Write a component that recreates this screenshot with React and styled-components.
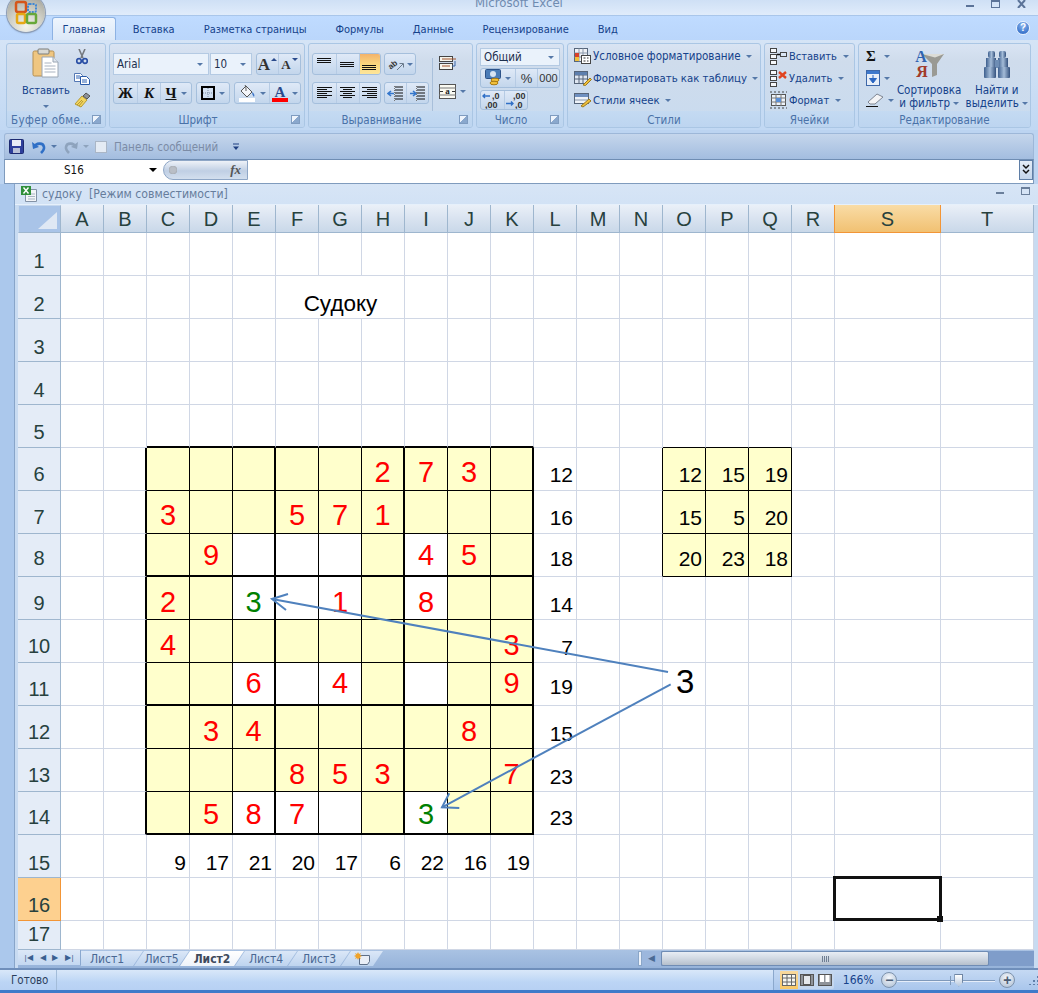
import React from 'react'
import styled, { createGlobalStyle } from 'styled-components'

const GlobalStyle = createGlobalStyle`
  html, body { margin: 0; padding: 0; background: #bcd4f1; }
  * { box-sizing: border-box; }
`

const uiFont = `"DejaVu Sans", "Noto Sans", sans-serif`
const sheetFont = `"Liberation Sans", Arial, sans-serif`

const Page = styled.div`
  position: relative;
  width: 1038px;
  height: 993px;
  overflow: hidden;
  display: flex;
  flex-direction: column;
  background: #bcd4f1;
  font-family: ${uiFont};
  font-stretch: condensed;
  font-size: 11px;
  color: #15428b;
`
const Spacer = styled.span`
  flex: none;
  width: ${p => p.$w}px;
`

/* ---------- window top ---------- */
const TitleBar = styled.div`
  position: relative;
  height: 16px;
  flex: none;
  overflow: hidden;
  background: linear-gradient(#cfe0f5, #e0ecfb);
  border-bottom: 1px solid #a9c6ea;
`
const TitleText = styled.div`
  position: absolute;
  left: 475px;
  top: -5px;
  font-size: 13px;
  line-height: 15px;
  color: #6f8bb0;
`
const WinButtons = styled.div`
  position: absolute;
  right: 12px;
  top: 0;
  display: flex;
  gap: 17px;
`
const Orb = styled.div`
  position: absolute;
  left: 7px;
  top: -6px;
  width: 38px;
  height: 38px;
  border-radius: 50%;
  display: flex;
  align-items: center;
  justify-content: center;
  background: radial-gradient(circle at 50% 85%, #f4f4ee 0%, #cfcfc6 45%, #b4b4ab 70%, #8d8d86 100%);
  box-shadow: 0 0 0 1px #8e9db4, 0 1px 2px #6c83a6;
  z-index: 5;
`
const TabStrip = styled.div`
  height: 24px;
  flex: none;
  display: flex;
  align-items: flex-end;
  padding-left: 52px;
  background: linear-gradient(#bfdbff, #bad6fb);
  position: relative;
`
const RibbonTab = styled.div`
  height: ${p => (p.$active ? 23 : 22)}px;
  padding: 0 ${p => (p.$active ? 9.5 : 14.5)}px;
  margin-left: ${p => (p.$first ? 2.5 : 0)}px;
  display: flex;
  align-items: center;
  font-size: 11px;
  color: #15428b;
  ${p => p.$active && `
    background: linear-gradient(#eef5fd, #dbe8f8);
    border: 1px solid #8db2e3;
    border-bottom: none;
    border-radius: 3px 3px 0 0;
  `}
`
const HelpDot = styled.div`
  position: absolute;
  right: 8px;
  top: 5px;
  width: 14px;
  height: 14px;
  border-radius: 50%;
  background: radial-gradient(circle at 50% 30%, #8fb8ee, #1b5cc0);
  border: 1px solid #eaf2fc;
  color: #fff;
  font: bold 10px/12px ${sheetFont};
  text-align: center;
`

/* ---------- ribbon ---------- */
const Ribbon = styled.div`
  height: 90px;
  flex: none;
  display: flex;
  gap: 3px;
  padding: 3px 0 2px 6px;
  background: linear-gradient(#d5e4f6, #c1d8f3);
`
const Group = styled.div`
  position: relative;
  width: ${p => p.$w}px;
  display: flex;
  flex-direction: column;
  border: 1px solid #aac6e4;
  border-radius: 3px;
  background: linear-gradient(#d9e4f3 0%, #cfdcec 20%, #c9dbef 100%);
  overflow: hidden;
`
const GroupBody = styled.div`
  flex: 1;
  min-height: 0;
  display: flex;
  padding: ${p => p.$pad || '0'};
`
const GroupLabel = styled.div`
  height: 16px;
  flex: none;
  display: flex;
  align-items: center;
  justify-content: ${p => (p.$left ? 'flex-start' : 'center')};
  padding-left: ${p => (p.$left ? '4px' : '0')};
  padding-right: ${p => (p.$launcher ? '18px' : '0')};
  padding-top: 1px;
  letter-spacing: ${p => (p.$left ? '0.4px' : '0')};
  font-size: 11.5px;
  line-height: 16px;
  color: #4a72a8;
  background: linear-gradient(#c4daf2, #bdd5f0);
  white-space: nowrap;
`
const Launcher = styled.div`
  position: absolute;
  right: 4px;
  bottom: 3px;
  width: 9px;
  height: 9px;
  border: 1px solid #7f9cc0;
  background: linear-gradient(135deg, #eef4fc 45%, #8aa8cd 50%);
`
const ToolColumn = styled.div`
  display: flex;
  flex-direction: column;
  gap: ${p => p.$gap || 0}px;
  width: ${p => (p.$w ? `${p.$w}px` : 'auto')};
  padding-top: ${p => p.$top || 0}px;
`
const ToolRow = styled.div`
  display: flex;
  gap: ${p => p.$gap ?? 4}px;
  height: ${p => p.$h || 22}px;
`
const Combo = styled.div`
  width: ${p => p.$w}px;
  height: 100%;
  display: flex;
  align-items: center;
  justify-content: space-between;
  padding: 0 5px 0 3px;
  background: #eaf2fb;
  border: 1px solid #b4cae3;
  color: #1d2f4d;
  font-size: 11.5px;
`
const Caret = styled.span`
  flex: none;
  display: inline-block;
  width: 0;
  height: 0;
  border-left: 3px solid transparent;
  border-right: 3px solid transparent;
  border-top: 3px solid ${p => p.$c || '#5578a8'};
`
const NameCaret = styled(Caret)`
  border-width: 4px 4px 0;
`
const GrowCaret = styled(Caret)`
  margin: 0 0 9px -3px;
  transform: ${p => (p.$up ? 'rotate(180deg)' : 'none')};
`
const BtnBox = styled.div`
  width: ${p => p.$w}px;
  height: 100%;
  margin-left: ${p => p.$ml || 0}px;
  display: flex;
  border: 1px solid #a5bfdc;
  border-radius: 3px;
  background: linear-gradient(#dfe9f7, #c3d6ec);
  overflow: hidden;
`
const Btn = styled.div`
  flex: ${p => (p.$w ? `0 0 ${p.$w}px` : '1')};
  display: flex;
  align-items: center;
  justify-content: center;
  gap: ${p => p.$gap ?? 4}px;
  ${p => p.$on && 'background: linear-gradient(#f3b36b, #fbd97f 55%, #fde59a);'}
  & + & { border-left: 1px solid #b6cbe4; }
`
const StyleGlyph = styled.span`
  font-family: "Liberation Serif", serif;
  font-weight: bold;
  font-style: ${p => (p.$italic ? 'italic' : 'normal')};
  text-decoration: ${p => (p.$under ? 'underline' : 'none')};
  font-size: ${p => p.$size || 14}px;
  color: ${p => p.$c || '#111'};
  line-height: 1;
`
const NumGlyph = styled.span`
  font-family: ${sheetFont};
  font-size: ${p => p.$size}px;
  color: #333;
`
const PasteBtn = styled.div`
  width: 52px;
  margin-left: 13px;
  display: flex;
  flex-direction: column;
  align-items: center;
  padding-top: 4px;
  font-size: 11px;
  color: #15428b;
  span.t { margin-top: 4px; line-height: 14px; }
  ${Caret} { margin-top: 7px; }
`
const ClipColumn = styled.div`
  width: 20px;
  display: flex;
  flex-direction: column;
  align-items: center;
  justify-content: space-between;
  padding: 5px 0 3px;
`
const VSep = styled.div`
  width: 1px;
  height: 55px;
  margin: 5px 6px 0 3px;
  background: #a8bfda;
`
const ListRow = styled.div`
  height: 22px;
  display: flex;
  align-items: center;
  gap: ${p => p.$gap ?? 1}px;
  white-space: nowrap;
  font-size: ${p => p.$size || 11.5}px;
  color: #15428b;
  ${Caret} { margin-left: 4px; }
`
const BigBtn = styled.div`
  width: ${p => p.$w}px;
  display: flex;
  flex-direction: column;
  align-items: center;
  padding-top: 4px;
  font-size: 11.5px;
  line-height: 13px;
  color: #15428b;
  white-space: nowrap;
  text-align: center;
  svg { margin-bottom: 5px; }
  ${Caret} { margin-left: 3px; vertical-align: 2px; }
`
const SmallDrop = styled.div`
  height: 22px;
  display: flex;
  align-items: center;
  gap: ${p => p.$gap ?? 4}px;
`

/* ---------- quick access and formula bar ---------- */
const Qat = styled.div`
  height: 26px;
  flex: none;
  margin: 3px 4px 0;
  display: flex;
  align-items: center;
  padding-left: 4px;
  border: 1px solid #9db7d8;
  border-bottom: none;
  border-radius: 3px 3px 0 0;
  background: linear-gradient(#c5d6ec, #a3bddf);
  color: #7c8ca6;
  font-size: 11.5px;
`
const QatCheck = styled.div`
  width: 12px;
  height: 12px;
  margin: 0 7px 0 0;
  background: #e4ebf4;
  border: 1px solid #aab6c6;
`
const FormulaBar = styled.div`
  height: 25px;
  flex: none;
  margin: 0 4px;
  display: flex;
  background: #fff;
  border: 1px solid #7f9bbd;
  border-top: 1px solid #6f8db3;
  padding-bottom: 3px;
`
const NameBox = styled.div`
  width: 158px;
  display: flex;
  align-items: center;
  justify-content: space-between;
  padding: 0 6px 0 59px;
  color: #111;
  font-size: 11.5px;
`
const FxPill = styled.div`
  width: 85px;
  display: flex;
  align-items: center;
  justify-content: space-between;
  padding: 0 6px 0 5px;
  background: linear-gradient(#eef2f8, #c0cfe4 55%, #d3dfee);
  border: 1px solid #8ea6c6;
  border-radius: 11px 0 0 11px;
  font: italic bold 13px "Liberation Serif", serif;
  color: #555;
`
const FxDot = styled.div`
  width: 8px;
  height: 8px;
  border-radius: 50%;
  background: #b9bec6;
  box-shadow: inset 0 0 1px #777;
`
const FormulaInput = styled.div`
  flex: 1;
`
const ExpandBtn = styled.div`
  width: 14px;
  display: flex;
  align-items: center;
  justify-content: center;
  background: linear-gradient(#e3ecf7, #c4d5ea);
  border: 1px solid #5f7ea6;
`

/* ---------- workbook window ---------- */
const WorkArea = styled.div`
  flex: 1;
  min-height: 0;
  display: flex;
`
const SideBand = styled.div`
  width: 15px;
  flex: none;
  background: #abc8ec;
  border-right: 1px solid #88a5c9;
`
const DocWindow = styled.div`
  flex: 1;
  min-width: 0;
  display: flex;
  flex-direction: column;
  background: #c8dbf1;
`
const DocTitle = styled.div`
  position: relative;
  height: 21px;
  flex: none;
  display: flex;
  align-items: center;
  gap: 5px;
  padding-left: 6px;
  background: linear-gradient(#d7e5f6, #d2e2f5);
  border-bottom: 1px solid #e6f0fb;
  color: #667d9c;
  font-size: 12.2px;
  white-space: pre;
`
const DocButtons = styled.div`
  position: absolute;
  right: 8px;
  top: 3px;
  display: flex;
  gap: 17px;
`
const SheetWrap = styled.div`
  position: relative;
  margin-left: 3px;
  width: 1016px;
  height: 745px;
  flex: none;
  background: #fff;
`
const SheetGrid = styled.div`
  display: grid;
  grid-template-columns: repeat(19, 43px) 106px 93px;
  grid-template-rows: 28px repeat(15, 43px) 43px 29px;
  width: 100%;
  height: 100%;
`
const Corner = styled.div`
  position: relative;
  background: #a9c4e8;
  border: 1px solid #c6d8ee;
  border-right-color: #9eb6ce;
  border-bottom-color: #9eb6ce;
  &::after {
    content: '';
    position: absolute;
    right: 3px;
    bottom: 3px;
    width: 19px;
    height: 17px;
    background: #dfe8f4;
    clip-path: polygon(100% 0, 100% 100%, 0 100%);
  }
`
const ColHead = styled.div`
  display: flex;
  align-items: center;
  justify-content: center;
  font: 20px/1 ${sheetFont};
  color: #27413e;
  border-right: 1px solid ${p => (p.$sel ? '#f29536' : '#9eb6ce')};
  border-bottom: 1px solid ${p => (p.$sel ? '#f29536' : '#9eb6ce')};
  background: ${p => (p.$sel
    ? 'linear-gradient(#f9dca6, #f1c172)'
    : 'linear-gradient(#eaf0f8, #d9e3f0 50%, #c9d8e9)')};
  ${p => p.$sel && 'border-left: 1px solid #f29536; margin-left: -1px;'}
`
const RowHead = styled.div`
  display: flex;
  align-items: flex-end;
  justify-content: center;
  padding-bottom: ${p => 4 + (p.$lift || 0)}px;
  font: 20px/1 ${sheetFont};
  color: #27413e;
  border-right: 1px solid ${p => (p.$sel ? '#f29536' : '#9eb6ce')};
  border-bottom: 1px solid ${p => (p.$sel ? '#f29536' : '#9eb6ce')};
  background: ${p => (p.$sel ? '#fdd08f' : '#e4ecf7')};
`
const Cell = styled.div`
  position: relative;
  display: flex;
  align-items: flex-end;
  justify-content: ${p => (p.$align === 'center' ? 'center' : 'flex-end')};
  padding: ${p => (p.$align === 'center' ? `0 0 ${3 + p.$lift}px` : `0 3px ${5 + p.$lift}px 0`)};
  white-space: nowrap;
  font-family: ${sheetFont};
  font-size: ${p => p.$size}px;
  line-height: 1;
  color: ${p => p.$c || '#000'};
  background: ${p => p.$fill || 'transparent'};
  border-right: ${p => p.$right};
  border-bottom: ${p => p.$bottom};
`
const CellSelection = styled.div`
  position: absolute;
  left: -2px;
  top: -2px;
  right: -2px;
  bottom: -1px;
  border: 3px solid #111;
  z-index: 2;
  &::after {
    content: '';
    position: absolute;
    right: -4px;
    bottom: -4px;
    width: 6px;
    height: 6px;
    background: #111;
  }
`
const ArrowLayer = styled.svg`
  position: absolute;
  left: 0;
  top: 0;
  width: 1016px;
  height: 745px;
  pointer-events: none;
  z-index: 3;
`
const FloatDigit = styled.div`
  position: absolute;
  left: 658px;
  top: 460px;
  font: 33px/1 ${sheetFont};
  color: #000;
  z-index: 3;
`

/* ---------- sheet tabs and status ---------- */
const SheetBar = styled.div`
  margin-left: 3px;
  width: 1016px;
  height: 18px;
  flex: none;
  display: flex;
  background: linear-gradient(#a9c2e3, #96b3da);
`
const SheetNav = styled.div`
  width: 63px;
  flex: none;
  display: flex;
  align-items: center;
  justify-content: space-around;
  padding: 0 3px;
  margin-bottom: 3px;
  background: linear-gradient(#dce8f7, #c4d8f1);
  border-right: 1px solid #8aa8cf;
  color: #3a5f90;
  font: 8px/1 ${sheetFont};
`
const TabsRow = styled.div`
  display: flex;
  height: 15px;
  margin-top: 1px;
`
const SheetTab = styled.div`
  width: ${p => p.$w}px;
  margin-left: ${p => (p.$first ? 0 : -9)}px;
  display: flex;
  align-items: center;
  justify-content: center;
  padding-right: ${p => (p.$first ? 10 : 0)}px;
  font-size: 12px;
  font-weight: ${p => (p.$active ? 'bold' : 'normal')};
  color: ${p => (p.$active ? '#3f4a5c' : '#4a6893')};
  background: ${p => (p.$active ? 'linear-gradient(#fff, #eef3fa)' : 'linear-gradient(#dbe7f7, #bed4ef)')};
  clip-path: ${p => (p.$first
    ? 'polygon(0 0, 100% 0, calc(100% - 10px) 100%, 0 100%)'
    : 'polygon(10px 0, 100% 0, calc(100% - 10px) 100%, 0 100%)')};
  z-index: ${p => (p.$active ? 2 : 1)};
`
const HScroll = styled.div`
  margin-left: auto;
  width: 396px;
  display: flex;
  align-items: center;
  height: 15px;
  margin-top: 1px;
  background: #7f9dca;
`
const ScrollGrip = styled.div`
  width: 4px;
  height: 100%;
  background: #eef3fa;
  border: 1px solid #8aa6c8;
`
const ScrollLeft = styled.div`
  width: 19px;
  display: flex;
  justify-content: center;
  color: #4a6a94;
  font: 9px/1 ${sheetFont};
  background: #9cb7dd;
  height: 100%;
  align-items: center;
`
const ScrollThumb = styled.div`
  width: 328px;
  height: 100%;
  display: flex;
  align-items: center;
  justify-content: center;
  background: linear-gradient(#e8edf4, #d0d8e2 50%, #b5bfcc);
  border: 1px solid #6f8cb4;
  border-radius: 2px;
`
const ThumbLines = styled.div`
  width: 7px;
  height: 6px;
  background: repeating-linear-gradient(90deg, #6f7e92 0 1px, transparent 1px 2px);
`
const StatusBar = styled.div`
  height: 23px;
  flex: none;
  margin-top: 2px;
  display: flex;
  align-items: stretch;
  background: linear-gradient(#d9e7f9, #bcd5f5 60%, #b7d1f3);
  border-bottom: 3px solid #3f7ac9;
  box-shadow: 0 -2px 0 #6f8fbb;
  color: #2c3f5c;
  font-size: 11.5px;
`
const StatusText = styled.div`
  width: 57px;
  flex: none;
  padding-left: 11px;
  display: flex;
  align-items: center;
  border-right: 1px solid #a3bcd9;
`
const StatusRight = styled.div`
  margin-left: auto;
  width: 265px;
  display: flex;
  align-items: center;
  border-left: 1px solid #8ba8cc;
  background: linear-gradient(#c5d9f3, #a9c6ec);
  padding-left: 6px;
`
const ViewBtns = styled.div`
  display: flex;
  width: 56px;
  height: 18px;
  border-radius: 2px;
  background: #c4d7ef;
`
const ViewBtn = styled.div`
  flex: 1;
  display: flex;
  align-items: center;
  justify-content: center;
  ${p => p.$on && 'background: linear-gradient(#f8d9a0, #f9c866);'}
`
const ZoomText = styled.div`
  width: 40px;
  margin-left: 9px;
  color: #15428b;
  font-size: 12px;
`
const ZoomRound = styled.div`
  width: 16px;
  height: 16px;
  flex: none;
  border-radius: 50%;
  border: 1px solid #7d93ad;
  background: radial-gradient(circle at 50% 35%, #f5f8fc, #aabcd2);
  display: flex;
  align-items: center;
  justify-content: center;
  font: bold 14px/1 ${sheetFont};
  color: #4b5d75;
`
const ZoomTrack = styled.div`
  position: relative;
  width: 102px;
  height: 1px;
  margin-right: 4px;
  background: #7f99ba;
  box-shadow: 0 1px 0 #e6eefa;
`
const ZoomMark = styled.div`
  position: absolute;
  left: 53px;
  top: -4px;
  width: 1px;
  height: 9px;
  background: #7f99ba;
`
const ZoomThumb = styled.div`
  position: absolute;
  left: 57px;
  top: -6px;
  width: 9px;
  height: 13px;
  background: linear-gradient(#fff, #b8c9de);
  border: 1px solid #6f86a4;
  clip-path: polygon(0 0, 100% 0, 100% 65%, 50% 100%, 0 65%);
`
const Grip = styled.div`
  width: 10px;
  height: 10px;
  margin-left: 13px;
  background: radial-gradient(circle, #5f7ea8 1px, transparent 1.5px) 0 0 / 4px 4px;
  clip-path: polygon(100% 0, 100% 100%, 0 100%);
`

/* ---------- icons ---------- */
const OrbLogo = () => (
  <svg width="26" height="26" viewBox="0 0 26 26">
    <rect x="3" y="2" width="10" height="10" rx="2" fill="none" stroke="#d5561a" strokeWidth="2.5" />
    <rect x="15" y="4" width="8" height="8" rx="1.5" fill="none" stroke="#3f87d4" strokeWidth="2" strokeDasharray="2 1" />
    <rect x="4" y="14" width="8" height="9" rx="1.5" fill="none" stroke="#e6a817" strokeWidth="2.5" />
    <rect x="14" y="14" width="9" height="9" rx="1.5" fill="none" stroke="#67a83a" strokeWidth="2.5" />
  </svg>
)
const ClipboardIcon = () => (
  <svg width="28" height="32" viewBox="0 0 28 32">
    <rect x="1" y="3" width="21" height="25" rx="1.5" fill="#efc681" stroke="#b58f52" />
    <rect x="6" y="1" width="11" height="5" rx="1" fill="#d9d9d4" stroke="#7d7d78" />
    <path d="M10 9h11l5 5v15H10z" fill="#fff" stroke="#9aa6b4" />
    <path d="M21 9v5h5" fill="#dfe6ee" stroke="#9aa6b4" />
    <path d="M12.500 15h7M12.500 18h11M12.500 21h11M12.500 24h11" stroke="#a9b3c0" />
  </svg>
)
const ScissorsIcon = () => (
  <svg width="12" height="16" viewBox="0 0 12 16">
    <path d="M3 0l4 9M9 0L5 9" stroke="#75797f" strokeWidth="1.6" />
    <circle cx="3" cy="12" r="2.3" fill="none" stroke="#2a4fa5" strokeWidth="1.7" />
    <circle cx="9" cy="12" r="2.3" fill="none" stroke="#2a4fa5" strokeWidth="1.7" />
  </svg>
)
const CopyIcon = () => (
  <svg width="16" height="12" viewBox="0 0 16 12">
    <path d="M.5.5h6l2 2v6h-8z" fill="#fff" stroke="#5478b4" />
    <path d="M6.500 3.500h6l3 3v5h-9z" fill="#fff" stroke="#2a5aa8" />
    <path d="M2 3h4M2 5h4M8 7h5M8 9h5" stroke="#2f63b4" />
  </svg>
)
const BrushIcon = () => (
  <svg width="17" height="16" viewBox="0 0 17 16">
    <path d="M1 12L8 4l5 4-6 7z" fill="#f3d45f" stroke="#b59a32" />
    <path d="M3 13l5-5M5 14l4-5" stroke="#b59a32" />
    <path d="M9 4l3-3 4 3-3 3z" fill="#8d9199" stroke="#555" />
  </svg>
)
const Lines = ({ w = 16, h = 14, rows, c = '#111' }) => (
  <svg width={w} height={h} viewBox={`0 0 ${w} ${h}`}>
    {rows.map(([x1, x2, y], i) => (
      <rect key={i} x={x1} y={y} width={x2 - x1} height="1" fill={c} />
    ))}
  </svg>
)
const BorderIcon = () => (
  <svg width="14" height="14" viewBox="0 0 14 14">
    <rect x="1" y="1" width="12" height="12" fill="none" stroke="#000" strokeWidth="2" />
    <path d="M7 2v10M2 7h10" stroke="#7a8aa0" strokeDasharray="1 1" />
  </svg>
)
const FillIcon = () => (
  <svg width="17" height="18" viewBox="0 0 17 18">
    <path d="M2 7l5-5 6 6-5 5z" fill="#f4f6fa" stroke="#555" />
    <path d="M6 1c1 1 1 4 1 6" fill="none" stroke="#555" />
    <path d="M13 8c2 1 3 3 2 5-1-1-2-3-2-5z" fill="#3f77c8" />
    <rect x="0" y="14" width="16" height="4" fill="#fff" />
  </svg>
)
const ColorAIcon = () => (
  <svg width="16" height="18" viewBox="0 0 16 18">
    <text x="8" y="12.500" textAnchor="middle" fontFamily="Liberation Serif, serif" fontWeight="bold" fontSize="15" fill="#2a4a8c">A</text>
    <rect x="0" y="14" width="16" height="4" fill="#f00" />
  </svg>
)
const OrientIcon = () => (
  <svg width="18" height="15" viewBox="0 0 18 15">
    <text x="1" y="11" transform="rotate(-40 5 8)" fontFamily="Liberation Sans, sans-serif" fontWeight="bold" fontSize="8" fill="#333">ab</text>
    <path d="M10 13l6-6M12.500 6.500H16.500V10.500" fill="none" stroke="#6a7a8c" />
  </svg>
)
const IndentIcon = ({ flip }) => (
  <svg width="17" height="15" viewBox="0 0 17 15">
    <path d={flip ? 'M1 7.500h5M4 5l3 2.500L4 10' : 'M7 7.500H2M4 5L1 7.500 4 10'} fill="none" stroke="#3577cc" strokeWidth="1.6" />
    <path d="M8 1h8M8 4h8M8 7h8M8 10h8M8 13h8" stroke="#111" />
    <path d="M7.500 0v15" stroke="#777" strokeDasharray="1 1" />
  </svg>
)
const WrapIcon = () => (
  <svg width="18" height="16" viewBox="0 0 18 16">
    <rect x=".5" y="1.500" width="13" height="5" fill="#f6f6ee" stroke="#444" />
    <rect x=".5" y="8.500" width="13" height="6" fill="#f6f6ee" stroke="#444" />
    <path d="M3 4h14M3 11h8" stroke="#a0522d" />
    <path d="M16 6v5h-3" fill="none" stroke="#3a66a8" />
  </svg>
)
const MergeIcon = () => (
  <svg width="17" height="15" viewBox="0 0 17 15">
    <rect x=".5" y=".5" width="16" height="14" fill="#fafaf2" stroke="#555" />
    <path d="M0 4h17M0 11h17" stroke="#777" />
    <text x="8.500" y="10" textAnchor="middle" fontFamily="Liberation Serif, serif" fontWeight="bold" fontSize="9" fill="#222">a</text>
    <path d="M1 7.500h3M16 7.500h-3" stroke="#333" />
  </svg>
)
const MoneyIcon = () => (
  <svg width="16" height="18" viewBox="0 0 16 18">
    <rect x=".5" y=".5" width="15" height="9" rx="1" fill="#4a7cb8" stroke="#2c5288" />
    <ellipse cx="8" cy="5" rx="3" ry="3" fill="#d6e3f3" />
    <ellipse cx="10" cy="11" rx="4" ry="1.800" fill="#f0bf3b" stroke="#a87a12" />
    <ellipse cx="9" cy="14" rx="4" ry="1.800" fill="#f0bf3b" stroke="#a87a12" />
  </svg>
)
const DecimalIcon = ({ more }) => (
  <svg width="21" height="18" viewBox="0 0 21 18">
    <text x={more ? 8 : 10} y="8" fontFamily="Liberation Sans, sans-serif" fontWeight="bold" fontSize="9" fill="#333">{more ? ',00' : ',0'}</text>
    <text x={more ? 10 : 3} y="17" fontFamily="Liberation Sans, sans-serif" fontWeight="bold" fontSize="9" fill="#333">{more ? ',0' : ',00'}</text>
    <path d={more ? 'M1 12.500h7M6 10.500l2 2-2 2' : 'M1 5h7M3 3L1 5l2 2'} fill="none" stroke="#2f6fc6" strokeWidth="1.4" />
  </svg>
)
const TableIcon = () => (
  <svg width="18" height="16" viewBox="0 0 18 16">
    <rect x=".5" y="1.500" width="13" height="12" fill="#dfe7f2" stroke="#56657a" />
    <path d="M.5 5h13M.5 9h13M5 1.500v12M9 1.500v12" stroke="#56657a" />
    <rect x="1" y="2" width="12" height="3" fill="#5d7fae" />
    <path d="M9 15l7-7 1.500 1.500-6 6z" fill="#f0bf3b" stroke="#9a7a20" />
  </svg>
)
const CondIcon = () => (
  <svg width="18" height="16" viewBox="0 0 18 16">
    <rect x=".5" y=".5" width="13" height="13" fill="#f0f2f6" stroke="#56657a" />
    <path d="M5 .5v13M9 .5v13M.5 5h13M.5 9h13" stroke="#8a98ab" />
    <rect x="1" y="5" width="4" height="4" fill="#d9402a" />
    <rect x="1" y="9" width="4" height="4" fill="#f0bf3b" />
    <rect x="7.500" y="7.500" width="9" height="8" fill="#fff" stroke="#444" />
    <path d="M9.500 10h2M13 10h1.500M9.500 13h2M13 13h1.500" stroke="#333" />
  </svg>
)
const PencilTable = () => (
  <svg width="18" height="16" viewBox="0 0 18 16">
    <rect x=".5" y="1.500" width="14" height="10" fill="#eef2f8" stroke="#56657a" />
    <rect x="1" y="2" width="13" height="3" fill="#6f90c0" />
    <path d="M1 8h13" stroke="#8a98ab" />
    <path d="M7 14l8-7 2 2-8 6z" fill="#f0bf3b" stroke="#9a7a20" />
  </svg>
)
const CellsIcon = ({ kind }) => (
  <svg width="17" height="18" viewBox="0 0 17 18">
    <rect x=".5" y="1.500" width="6" height="4" fill="#f6f8fb" stroke="#444" />
    <rect x=".5" y="7.500" width="6" height="4" fill="#f6f8fb" stroke="#444" />
    <rect x=".5" y="13.500" width="6" height="4" fill="#f6f8fb" stroke="#444" />
    {kind === 'ins' && <><rect x="10.500" y="5.500" width="6" height="4" fill="#dbe6f4" stroke="#444" /><path d="M7 7.500h3" stroke="#111" strokeWidth="1.5" /></>}
    {kind === 'del' && <path d="M9 3l7 6M16 3l-7 6" stroke="#e0431f" strokeWidth="2.4" />}
  </svg>
)
const FormatCellsIcon = () => (
  <svg width="17" height="18" viewBox="0 0 17 18">
    <rect x="1.500" y="3.500" width="14" height="11" fill="#eef3f9" stroke="#555" />
    <path d="M1 7h15M1 11h15M6 3v12M11 3v12" stroke="#777" />
    <rect x="6" y="7" width="5" height="4" fill="#5b8fd6" />
    <path d="M0 1h17M0 17h17" stroke="#444" strokeDasharray="2 2" />
  </svg>
)
const DownFillIcon = () => (
  <svg width="14" height="16" viewBox="0 0 14 16">
    <rect x=".5" y=".5" width="13" height="15" fill="#e7eef8" stroke="#3d67a8" />
    <rect x="1" y="1" width="12" height="3" fill="#3d78cc" />
    <path d="M7 5v4M3.500 8.500L7 13l3.500-4.500z" fill="#2a66c2" stroke="#2a66c2" />
  </svg>
)
const EraserIcon = () => (
  <svg width="18" height="14" viewBox="0 0 18 14">
    <path d="M2 9l9-8 6 3-8 7H4z" fill="#f4f4f6" stroke="#7d8592" />
    <path d="M0 13.500h12" stroke="#111" />
  </svg>
)
const SortIcon = () => (
  <svg width="30" height="30" viewBox="0 0 30 30">
    <path d="M8 5h22l-7 10v11l-5 2V15z" fill="#9a9a94" />
    <path d="M8 5h22l-9 3.500z" fill="#dcdcd6" />
    <text x="7" y="13" textAnchor="middle" fontFamily="Liberation Serif, serif" fontWeight="bold" fontSize="16" fill="#2f63b0">A</text>
    <text x="8" y="28" textAnchor="middle" fontFamily="Liberation Serif, serif" fontWeight="bold" fontSize="16" fill="#a23b2a">Я</text>
  </svg>
)
const BinocularsIcon = () => (
  <svg width="28" height="30" viewBox="0 0 28 30">
    <defs>
      <linearGradient id="bn" x1="0" x2="1"><stop offset="0" stopColor="#3d5f8e" /><stop offset=".5" stopColor="#a4bcd8" /><stop offset="1" stopColor="#34527e" /></linearGradient>
    </defs>
    <rect x="5" y="2" width="7" height="7" rx="2" fill="url(#bn)" />
    <rect x="16" y="2" width="7" height="7" rx="2" fill="url(#bn)" />
    <rect x="3" y="9" width="10" height="9" fill="url(#bn)" />
    <rect x="15" y="9" width="10" height="9" fill="url(#bn)" />
    <rect x="12" y="11" width="4" height="8" fill="#6e8db4" />
    <rect x="1" y="18" width="12" height="11" rx="1" fill="url(#bn)" />
    <rect x="15" y="18" width="12" height="11" rx="1" fill="url(#bn)" />
  </svg>
)
const SaveIcon = () => (
  <svg width="15" height="15" viewBox="0 0 15 15">
    <rect x=".5" y=".5" width="14" height="14" rx="1" fill="#2e3f9b" stroke="#1d2a70" />
    <rect x="3" y="1" width="9" height="6" fill="#e9edf6" />
    <rect x="4" y="9" width="7" height="5" fill="#b9c1d8" />
  </svg>
)
const UndoIcon = ({ c }) => (
  <svg width="14" height="14" viewBox="0 0 14 14">
    <path d="M2 7c2-4 9-5 10 0 .4 2.500-1 4-3 6" fill="none" stroke={c} strokeWidth="2.6" />
    <path d="M0 2l1 7 6-2z" fill={c} />
  </svg>
)
const RedoIcon = ({ c }) => (
  <svg width="14" height="14" viewBox="0 0 14 14">
    <path d="M12 7C10 3 3 2 2 7c-.4 2.500 1 4 3 6" fill="none" stroke={c} strokeWidth="2.6" />
    <path d="M14 2l-1 7-6-2z" fill={c} />
  </svg>
)
const QatMore = () => (
  <svg width="8" height="8" viewBox="0 0 8 8">
    <path d="M1 1h6" stroke="#1f3f80" />
    <path d="M1 3.500h6L4 7z" fill="#1f3f80" />
  </svg>
)
const ChevronsDown = () => (
  <svg width="10" height="12" viewBox="0 0 10 12">
    <path d="M2 1l3 3 3-3M2 6l3 3 3-3" fill="none" stroke="#111" strokeWidth="1.5" />
  </svg>
)
const WinMin = ({ c = '#5b7398' }) => <svg width="8" height="8" viewBox="0 0 8 8"><rect y="5" width="8" height="2" fill={c} /></svg>
const WinMax = ({ c = '#5b7398' }) => <svg width="9" height="8" viewBox="0 0 9 8"><rect x=".5" y=".5" width="8" height="7" fill="none" stroke={c} /><rect width="9" height="2" fill={c} /></svg>
const WinClose = ({ c = '#5b7398' }) => <svg width="9" height="8" viewBox="0 0 9 8"><path d="M1 0l7 8M8 0L1 8" stroke={c} strokeWidth="2" /></svg>
const ExcelDocIcon = () => (
  <svg width="16" height="16" viewBox="0 0 16 16">
    <path d="M4.500 3.500h11v12h-11z" fill="#f3f5f8" stroke="#8392a6" />
    <path d="M7 8h7M7 10.500h7M7 13h7" stroke="#a9b5c4" />
    <rect x="0" y="0" width="10" height="9" fill="#2f8f3a" />
    <path d="M2.500 1.500l5 6M7.500 1.500l-5 6" stroke="#fff" strokeWidth="1.4" />
  </svg>
)
const NewSheetIcon = () => (
  <svg width="17" height="13" viewBox="0 0 17 13">
    <path d="M5.500 3.500h10v6l-2 3h-8z" fill="#e8eef7" stroke="#5d6f88" />
    <path d="M4 0l1 2 2-1-1 2 2 1-2 1 1 2-2-1-1 2-1-2-2 1 1-2-2-1 2-1-1-2 2 1z" fill="#f0a32a" />
  </svg>
)
const ViewNormal = () => (
  <svg width="14" height="12" viewBox="0 0 14 12"><rect x=".5" y=".5" width="13" height="11" fill="#f7f7f2" stroke="#666" /><path d="M.5 4h13M.5 8h13M5 .5v11M9.500 .5v11" stroke="#666" /></svg>
)
const ViewPage = () => (
  <svg width="14" height="12" viewBox="0 0 14 12"><rect x=".5" y=".5" width="13" height="11" fill="#8f9399" stroke="#555" /><rect x="3.500" y="1.500" width="7" height="9" fill="#e5e8ec" stroke="#555" /></svg>
)
const ViewBreak = () => (
  <svg width="14" height="12" viewBox="0 0 14 12"><rect x=".5" y=".5" width="13" height="11" fill="#8f9399" stroke="#555" /><rect x="2" y="1" width="4" height="7" fill="#fff" /><rect x="7.500" y="1" width="4" height="7" fill="#fff" /></svg>
)

/* ---------- sheet data ---------- */
const COLS = 'ABCDEFGHIJKLMNOPQRST'.split('')
const TABS = ['Главная', 'Вставка', 'Разметка страницы', 'Формулы', 'Данные', 'Рецензирование', 'Вид']
const SUDOKU = {
  6: '.....273.',
  7: '3..571...',
  8: '.9....45.',
  9: '2.3.1.8..',
  10: '4.......3',
  11: '..6.4...9',
  12: '.34....8.',
  13: '...853..7',
  14: '.587..3..',
}
const WHITE_ROWS = [8, 9, 11, 14]
const WHITE_COLS = [4, 5, 6, 8]
const GREEN = ['9-4', '14-8']
const SIDE = { 6: 12, 7: 16, 8: 18, 9: 14, 10: 7, 11: 19, 12: 15, 13: 23, 14: 23 }
const BOTTOM = { 2: 9, 3: 17, 4: 21, 5: 20, 6: 17, 7: 6, 8: 22, 9: 16, 10: 19 }
const MINI = { 6: [12, 15, 19], 7: [15, 5, 20], 8: [20, 23, 18] }
const ROW_LIFT = { 6: 0, 7: 0, 8: 2, 9: -1, 10: -1, 11: 3, 12: -1, 13: -1, 14: 1, 15: -1 }
const HEAD_LIFT = { 5: 1, 6: 2, 7: 2, 8: 4, 9: 2, 10: 2, 11: 2, 12: 2, 13: 2, 14: 3, 16: 1, 17: 1 }
const GRID_LINE = '1px solid #d0d7e5'
const THIN = '1px solid #000'
const THICK = '2px solid #000'

const inBox = (r, c) => r >= 6 && r <= 14 && c >= 2 && c <= 10
const inMini = (r, c) => r >= 6 && r <= 8 && c >= 14 && c <= 16

const rightEdge = (r, c) => {
  if (r === 2 && (c === 5 || c === 6)) return 'none'
  if (r >= 6 && r <= 14 && [1, 4, 7, 10].includes(c)) return THICK
  if (inBox(r, c) || inMini(r, c) || (r >= 6 && r <= 8 && c === 13)) return THIN
  return GRID_LINE
}
const bottomEdge = (r, c) => {
  if (c >= 2 && c <= 10 && [5, 8, 11, 14].includes(r)) return THICK
  if (inBox(r, c) || inMini(r, c) || (r === 5 && c >= 14 && c <= 16)) return THIN
  return GRID_LINE
}

const cellContent = (r, c) => {
  if (inBox(r, c)) {
    const ch = SUDOKU[r][c - 2]
    const white = WHITE_ROWS.includes(r) && WHITE_COLS.includes(c)
    return {
      text: ch === '.' ? '' : ch,
      size: 29,
      align: 'center',
      fill: white ? '#fff' : '#ffffcc',
      color: GREEN.includes(`${r}-${c}`) ? '#008000' : '#f00',
    }
  }
  if (inMini(r, c)) return { text: MINI[r][c - 14], fill: '#ffffcc' }
  if (c === 11 && SIDE[r]) return { text: SIDE[r] }
  if (r === 15 && BOTTOM[c]) return { text: BOTTOM[c] }
  if (r === 2 && c === 6) return { text: 'Судоку', align: 'center', size: 22.5 }
  return { text: '' }
}

const SheetCells = () => {
  const rows = []
  rows.push(<Corner key="corner" />)
  COLS.forEach((col) => rows.push(<ColHead key={col} $sel={col === 'S'}>{col}</ColHead>))
  for (let r = 1; r <= 17; r++) {
    rows.push(<RowHead key={`h${r}`} $sel={r === 16} $lift={HEAD_LIFT[r]}>{r}</RowHead>)
    COLS.forEach((col, c) => {
      const data = cellContent(r, c)
      rows.push(
        <Cell
          key={`${col}${r}`}
          $size={data.size || 21}
          $lift={ROW_LIFT[r] || 0}
          $align={data.align}
          $fill={data.fill}
          $c={data.color}
          $right={rightEdge(r, c)}
          $bottom={bottomEdge(r, c)}
        >
          {data.text}
          {col === 'S' && r === 16 && <CellSelection />}
        </Cell>
      )
    })
  }
  return rows
}

const Group1 = () => (
  <Group $w={100}>
    <GroupBody>
      <PasteBtn>
        <ClipboardIcon />
        <span className="t">Вставить</span>
        <Caret />
      </PasteBtn>
      <ClipColumn>
        <ScissorsIcon />
        <CopyIcon />
        <BrushIcon />
      </ClipColumn>
    </GroupBody>
    <GroupLabel $left>Буфер обме...</GroupLabel>
    <Launcher />
  </Group>
)

const Group2 = () => (
  <Group $w={196}>
    <GroupBody $pad="9px 0 0 3px">
      <ToolColumn $gap={7}>
        <ToolRow $gap={1}>
          <Combo $w={96}>Arial<Caret /></Combo>
          <Combo $w={42}>10<Caret /></Combo>
          <BtnBox $w={45} $ml={3}>
            <Btn><StyleGlyph $size={17} $c="#333">A</StyleGlyph><GrowCaret $up $c="#2a4a8c" /></Btn>
            <Btn><StyleGlyph $size={13} $c="#333">A</StyleGlyph><GrowCaret $c="#2a4a8c" /></Btn>
          </BtnBox>
        </ToolRow>
        <ToolRow>
          <BtnBox $w={79}>
            <Btn $w={23}><StyleGlyph $size={15}>Ж</StyleGlyph></Btn>
            <Btn $w={23}><StyleGlyph $size={15} $italic>К</StyleGlyph></Btn>
            <Btn><StyleGlyph $size={15} $under>Ч</StyleGlyph><Caret /></Btn>
          </BtnBox>
          <BtnBox $w={34}><Btn><BorderIcon /><Caret /></Btn></BtnBox>
          <BtnBox $w={67}>
            <Btn $w={34}><FillIcon /><Caret /></Btn>
            <Btn><ColorAIcon /><Caret /></Btn>
          </BtnBox>
        </ToolRow>
      </ToolColumn>
    </GroupBody>
    <GroupLabel $launcher>Шрифт</GroupLabel>
    <Launcher />
  </Group>
)

const TOP_LINES = [[0, 14, 1], [0, 14, 3], [0, 14, 5]]
const MID_LINES = [[0, 14, 5], [0, 14, 7], [0, 14, 9]]
const BOT_LINES = [[0, 14, 8], [0, 14, 10], [0, 14, 12]]
const LEFT_LINES = [[0, 15, 1], [0, 10, 3], [0, 15, 5], [0, 10, 7], [0, 15, 9], [0, 10, 11]]
const CENTER_LINES = [[0, 15, 1], [3, 12, 3], [0, 15, 5], [3, 12, 7], [0, 15, 9], [3, 12, 11]]
const RIGHT_LINES = [[0, 15, 1], [5, 15, 3], [0, 15, 5], [5, 15, 7], [0, 15, 9], [5, 15, 11]]

const Group3 = () => (
  <Group $w={165}>
    <GroupBody $pad="9px 0 0 3px">
      <ToolColumn $gap={7}>
        <ToolRow $gap={3}>
          <BtnBox $w={69}>
            <Btn $w={23}><Lines rows={TOP_LINES} /></Btn>
            <Btn $w={23}><Lines rows={MID_LINES} /></Btn>
            <Btn $on><Lines rows={BOT_LINES} /></Btn>
          </BtnBox>
          <BtnBox $w={32}><Btn $gap={2}><OrientIcon /><Caret /></Btn></BtnBox>
        </ToolRow>
        <ToolRow $gap={3}>
          <BtnBox $w={69}>
            <Btn $w={23}><Lines rows={LEFT_LINES} /></Btn>
            <Btn $w={23}><Lines rows={CENTER_LINES} /></Btn>
            <Btn><Lines rows={RIGHT_LINES} /></Btn>
          </BtnBox>
          <BtnBox $w={45}>
            <Btn><IndentIcon /></Btn>
            <Btn><IndentIcon flip /></Btn>
          </BtnBox>
        </ToolRow>
      </ToolColumn>
      <VSep />
      <ToolColumn $gap={9} $top={2}>
        <WrapIcon />
        <SmallDrop><MergeIcon /><Caret /></SmallDrop>
      </ToolColumn>
    </GroupBody>
    <GroupLabel $launcher>Выравнивание</GroupLabel>
    <Launcher />
  </Group>
)

const Group4 = () => (
  <Group $w={88}>
    <GroupBody $pad="4px 0 0 3px">
      <ToolColumn $gap={2}>
        <ToolRow $h={18}><Combo $w={80}>Общий<Caret /></Combo></ToolRow>
        <ToolRow $h={20}>
          <BtnBox $w={80}>
            <Btn $w={34}><MoneyIcon /><Caret /></Btn>
            <Btn $w={22}><NumGlyph $size={13}>%</NumGlyph></Btn>
            <Btn><NumGlyph $size={11}>000</NumGlyph></Btn>
          </BtnBox>
        </ToolRow>
        <ToolRow $h={20}>
          <BtnBox $w={48}>
            <Btn><DecimalIcon /></Btn>
            <Btn><DecimalIcon more /></Btn>
          </BtnBox>
        </ToolRow>
      </ToolColumn>
    </GroupBody>
    <GroupLabel $launcher>Число</GroupLabel>
    <Launcher />
  </Group>
)

const Group5 = () => (
  <Group $w={194}>
    <GroupBody $pad="1px 0 0 6px">
      <ToolColumn>
        <ListRow><CondIcon /><span>Условное форматирование</span><Caret /></ListRow>
        <ListRow $size={11.3}><TableIcon /><span>Форматировать как таблицу</span><Caret /></ListRow>
        <ListRow $size={11.3}><PencilTable /><span>Стили ячеек</span><Caret /></ListRow>
      </ToolColumn>
    </GroupBody>
    <GroupLabel>Стили</GroupLabel>
  </Group>
)

const Group6 = () => (
  <Group $w={91}>
    <GroupBody $pad="1px 0 0 5px">
      <ToolColumn>
        <ListRow $gap={2} $size={11}><CellsIcon kind="ins" /><span>Вставить</span><Caret /></ListRow>
        <ListRow $gap={2} $size={11}><CellsIcon kind="del" /><span>Удалить</span><Caret /></ListRow>
        <ListRow $gap={2} $size={11}><FormatCellsIcon /><span>Формат</span><Caret /></ListRow>
      </ToolColumn>
    </GroupBody>
    <GroupLabel>Ячейки</GroupLabel>
  </Group>
)

const Group7 = () => (
  <Group $w={173}>
    <GroupBody $pad="1px 0 0 7px">
      <ToolColumn $w={29}>
        <SmallDrop $gap={8}><StyleGlyph $size={15}>Σ</StyleGlyph><Caret /></SmallDrop>
        <SmallDrop><DownFillIcon /><Caret /></SmallDrop>
        <SmallDrop><EraserIcon /><Caret /></SmallDrop>
      </ToolColumn>
      <BigBtn $w={69}>
        <SortIcon />
        <span>Сортировка</span>
        <span>и фильтр<Caret /></span>
      </BigBtn>
      <BigBtn $w={67}>
        <BinocularsIcon />
        <span>Найти и</span>
        <span>выделить<Caret /></span>
      </BigBtn>
    </GroupBody>
    <GroupLabel>Редактирование</GroupLabel>
  </Group>
)

export default function App() {
  return (
    <Page>
      <GlobalStyle />
      <TitleBar>
        <TitleText>Microsoft Excel</TitleText>
        <WinButtons>
          <WinMin />
          <WinMax />
          <WinClose />
        </WinButtons>
      </TitleBar>
      <Orb><OrbLogo /></Orb>
      <TabStrip>
        {TABS.map((t, i) => (
          <RibbonTab key={t} $active={i === 0} $first={i === 1}>{t}</RibbonTab>
        ))}
        <HelpDot>?</HelpDot>
      </TabStrip>
      <Ribbon>
        <Group1 />
        <Group2 />
        <Group3 />
        <Group4 />
        <Group5 />
        <Group6 />
        <Group7 />
      </Ribbon>
      <Qat>
        <SaveIcon />
        <Spacer $w={8} />
        <UndoIcon c="#2f6fc6" />
        <Spacer $w={5} />
        <Caret />
        <Spacer $w={7} />
        <RedoIcon c="#8ea3bd" />
        <Spacer $w={5} />
        <Caret $c="#8ea3bd" />
        <Spacer $w={6} />
        <QatCheck />
        <span>Панель сообщений</span>
        <Spacer $w={14} />
        <QatMore />
      </Qat>
      <FormulaBar>
        <NameBox>S16<NameCaret $c="#000" /></NameBox>
        <FxPill><FxDot />fx</FxPill>
        <FormulaInput />
        <ExpandBtn><ChevronsDown /></ExpandBtn>
      </FormulaBar>
      <WorkArea>
        <SideBand />
        <DocWindow>
          <DocTitle>
            <ExcelDocIcon />
            {'судоку  [Режим совместимости]'}
            <DocButtons>
              <WinMin c="#6a7f9b" />
              <WinMax c="#6a7f9b" />
            </DocButtons>
          </DocTitle>
          <SheetWrap>
            <SheetGrid><SheetCells /></SheetGrid>
            <ArrowLayer viewBox="0 0 1016 745">
              <g fill="none" stroke="#4f81bd" strokeWidth="2">
                <path d="M650 467L254 394" />
                <path d="M270 389L254 394L268 405" />
                <path d="M652.700 479.300L424 602.300" />
                <path d="M441.300 603L424 602.300L431.300 588.300" />
              </g>
            </ArrowLayer>
            <FloatDigit>3</FloatDigit>
          </SheetWrap>
          <SheetBar>
            <SheetNav><span>|◀</span><span>◀</span><span>▶</span><span>▶|</span></SheetNav>
            <TabsRow>
              <SheetTab $first $w={62}>Лист1</SheetTab>
              <SheetTab $w={55}>Лист5</SheetTab>
              <SheetTab $active $w={64}>Лист2</SheetTab>
              <SheetTab $w={62}>Лист4</SheetTab>
              <SheetTab $w={62}>Лист3</SheetTab>
              <SheetTab $w={42}><NewSheetIcon /></SheetTab>
            </TabsRow>
            <HScroll>
              <ScrollGrip />
              <ScrollLeft>◀</ScrollLeft>
              <ScrollThumb><ThumbLines /></ScrollThumb>
            </HScroll>
          </SheetBar>
        </DocWindow>
      </WorkArea>
      <StatusBar>
        <StatusText>Готово</StatusText>
        <StatusRight>
          <ViewBtns>
            <ViewBtn $on><ViewNormal /></ViewBtn>
            <ViewBtn><ViewPage /></ViewBtn>
            <ViewBtn><ViewBreak /></ViewBtn>
          </ViewBtns>
          <ZoomText>166%</ZoomText>
          <ZoomRound>−</ZoomRound>
          <ZoomTrack><ZoomMark /><ZoomThumb /></ZoomTrack>
          <ZoomRound>+</ZoomRound>
          <Grip />
        </StatusRight>
      </StatusBar>
    </Page>
  )
}
